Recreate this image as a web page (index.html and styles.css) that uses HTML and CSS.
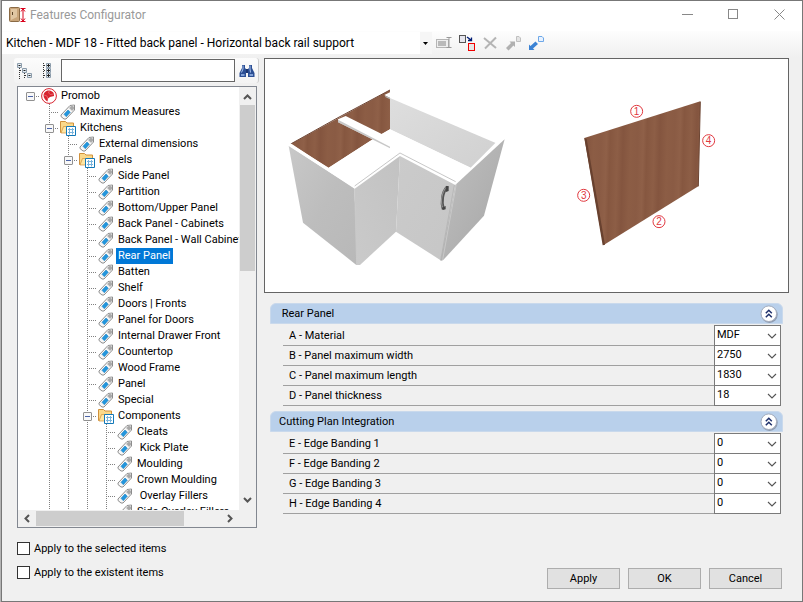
FILE: index.html
```html
<!DOCTYPE html>
<html lang="en">
<head>
    <meta charset="UTF-8">
    <meta name="viewport" content="width=device-width, initial-scale=1.0">
    <title>Features Configurator</title>
    <link rel="stylesheet" href="styles.css">
</head>
<body>
    <!-- shared icons -->
    <svg class="defs" width="0" height="0">
        <symbol id="tag" viewBox="0 0 16 16">
            <path d="M1 11L10 1.500L14.500 1V6L6 15H4L1 12.500Z" fill="#f7f7f7" stroke="#8c8c8c"/>
            <path d="M10.300 2L14 1.500V5.500L12.300 7.500L8.500 4Z" fill="#d2d2d2"/>
            <path d="M11 3H13V5H11Z" fill="#fff" stroke="#777" stroke-width=".8"/>
            <path d="M4 10.300L8 6L10.300 8.200L6.300 12.700Z" fill="#2196de" stroke="#1b7fc0" stroke-width=".6"/>
        </symbol>
        <symbol id="folder" viewBox="0 0 16 16">
            <path d="M.5 12.500V1.500H5.500L7 3H13.500V12.500Z" fill="#fbd98a" stroke="#d0913c"/>
            <path d="M1 13L3.500 6.500H14V13Z" fill="#ffe7a5" stroke="#d0913c" stroke-width=".7"/>
            <path d="M6.500 6.500H15.500V15.500H6.500Z" fill="#fff" stroke="#1479b8"/>
            <path d="M8 9.500H14M8 12.500H14M9.500 8V14.500M12.500 8V14.500" stroke="#78b4dc"/>
        </symbol>
        <symbol id="promob" viewBox="0 0 16 16">
            <circle cx="8" cy="8" r="7.400" fill="#fff" stroke="#d8232f" stroke-width="1"/>
            <path d="M8.500 2.500C5 2 2.800 4.500 2.500 7.500C2.500 10 4.500 12.500 6.500 13.500L7 10.500L9 9L13 8C13.500 5 11.500 3 8.500 2.500Z" fill="#d8232f"/>
            <path d="M8.500 2.500L7.500 5L9.500 6.500L13 6M2.800 7L6 8L7 11" stroke="#f29a9f" stroke-width=".5" fill="none"/>
        </symbol>
        <symbol id="chevron" viewBox="0 0 10 6">
            <path d="M1 1L5 5L9 1" fill="none" stroke="#555" stroke-width="1.100"/>
        </symbol>
        <symbol id="collapse" viewBox="0 0 18 18">
            <circle cx="9.500" cy="9.700" r="8.200" fill="#8e9bb0"/>
            <circle cx="8.800" cy="8.700" r="7.800" fill="#fff" stroke="#a3acbd"/>
            <path d="M5.800 8.300L8.800 5.300L11.800 8.300M5.800 12.300L8.800 9.300L11.800 12.300" fill="none" stroke="#1d2f6b" stroke-width="1.500"/>
        </symbol>
    </svg>

    <div class="window">
        <header class="titlebar">
            <svg class="app-icon" width="18" height="16" viewBox="0 0 18 16">
                <rect x=".5" y=".5" width="10" height="14" rx="1" fill="#c9a57a" stroke="#8a6a45"/>
                <path d="M2 2H8V10L2 13Z" fill="#e0c6a2"/>
                <path d="M3.500 5V8" stroke="#5c4427"/>
                <path d="M11.500 1.500H16.500M11.500 14.500H16.500M14 2V14M12 4.500L14 2L16 4.500M12 11.500L14 14L16 11.500" fill="none" stroke="#d9001b"/>
            </svg>
            <h1>Features Configurator</h1>
            <div class="window-buttons">
                <button type="button" aria-label="Minimize"><svg width="11" height="11"><path d="M0 5.500H11" stroke="#888"/></svg></button>
                <button type="button" aria-label="Maximize"><svg width="11" height="11"><rect x=".5" y=".5" width="9" height="9" fill="none" stroke="#888"/></svg></button>
                <button type="button" aria-label="Close"><svg width="11" height="11"><path d="M.5 .5L10.500 10.500M10.500 .5L.5 10.500" stroke="#888"/></svg></button>
            </div>
        </header>

        <div class="toolbar">
            <div class="model">
                <select aria-label="Model">
                    <option>Kitchen - MDF 18 - Fitted back panel - Horizontal back rail support</option>
                </select>
                <svg class="model-arrow" width="5" height="3"><path d="M0 0H5L2.500 3Z" fill="#000"/></svg>
            </div>
            <button type="button" aria-label="Rename">
                <svg width="16" height="16" viewBox="0 0 16 16">
                    <rect x=".5" y="4.500" width="12" height="8" fill="#eee" stroke="#b5b5b5"/>
                    <rect x="2" y="6" width="8" height="5" fill="#b9b9b9"/>
                    <path d="M10.500 2.500H15.500M10.500 12.500H15.500M13 2.500V12.500" stroke="#999"/>
                </svg>
            </button>
            <button type="button" aria-label="Duplicate">
                <svg width="16" height="16" viewBox="0 0 16 16">
                    <rect x=".5" y=".5" width="6" height="7" fill="#e6e6ee" stroke="#555"/>
                    <path d="M8 2L12 5M12.500 2.500V5.500H9" fill="none" stroke="#001c74" stroke-width="1.300"/>
                    <rect x="9.500" y="8.500" width="6" height="7" fill="#e6e6e6" stroke="#f00000"/>
                </svg>
            </button>
            <button type="button" aria-label="Delete">
                <svg width="16" height="16" viewBox="0 0 16 16"><path d="M2 3L14 13M14 2.500L3 13.500" stroke="#b4b4b4" stroke-width="2"/></svg>
            </button>
            <button type="button" aria-label="Export">
                <svg width="16" height="16" viewBox="0 0 16 16">
                    <path d="M1 13L6 8L4.500 6.500H10V12L8.500 10.500L3.500 15.500Z" fill="#b0b0b0"/>
                    <path d="M11.500 1.500H14L15.500 3V6.500H11.500Z" fill="#e4e4e4" stroke="#c0c0c0"/>
                </svg>
            </button>
            <button type="button" aria-label="Import">
                <svg width="16" height="16" viewBox="0 0 16 16">
                    <path d="M1 9.500L2.500 11L7.500 6.500L10 9L5 13.500L6.500 15H1Z" fill="#3b82d4"/>
                    <path d="M10.500 1.500H14L15.500 3V6.500H10.500Z" fill="#e8f2ff" stroke="#6ea8e8"/>
                </svg>
            </button>
        </div>

        <main class="content">
            <section class="sidebar">
                <div class="search">
                    <button type="button" aria-label="Expand tree">
                        <svg width="16" height="16" viewBox="0 0 16 16">
                            <path d="M2.500 5V16M7.500 10V16" stroke="#333" stroke-dasharray="1 1"/>
                            <path d="M3 7.500H6M8 12.500H11" stroke="#333" stroke-dasharray="1 1"/>
                            <path d="M.5 .5H4.500V4.500H.5ZM5.500 5.500H9.500V9.500H5.500ZM10.500 10.500H14.500V14.500H10.500Z" fill="#e4ecf2" stroke="#8c9cab"/>
                            <path d="M1.500 2.500H3.500M6.500 7.500H8.500M11.500 12.500H13.500" stroke="#222"/>
                        </svg>
                    </button>
                    <button type="button" aria-label="Collapse tree">
                        <svg width="16" height="16" viewBox="0 0 16 16">
                            <path d="M4.500 0V16M5 2.500H8M5 7.500H8M5 12.500H8" stroke="#333" stroke-dasharray="1 1"/>
                            <path d="M7.500 .5H11.500V4.500H7.500ZM7.500 5.500H11.500V9.500H7.500ZM7.500 10.500H11.500V14.500H7.500Z" fill="#e4ecf2" stroke="#8c9cab"/>
                            <path d="M8 2.500H11M9.500 1V4M8 7.500H11M9.500 6V9M8 12.500H11M9.500 11V14" stroke="#222"/>
                        </svg>
                    </button>
                    <input type="text" aria-label="Search">
                    <button type="button" aria-label="Find">
                        <svg width="16" height="14" viewBox="0 0 16 14">
                            <path d="M3 1H6V4L7 5V13H.5V9L3 4ZM10 1H13V4L15.500 9V13H9V5L10 4Z" fill="#2c4f94"/>
                            <path d="M7 5H9V9H7Z" fill="#1b3570"/>
                            <path d="M4 1.500V5L2.500 8.500M11 1.500V5L11.500 8.500" fill="none" stroke="#a9c4ee"/>
                            <path d="M2 11H5.500M10.500 11H14" stroke="#7f9fd6" stroke-width="2"/>
                        </svg>
                    </button>
                </div>

                <div class="tree">
                    <div class="tree-view">
                        <ul>
                            <li>
                                <div class="node"><button type="button" class="toggle" aria-label="Toggle"></button><svg><use href="#promob"/></svg><span>Promob</span></div>
                                <ul>
                                    <li><div class="node leaf"><svg><use href="#tag"/></svg><span>Maximum Measures</span></div></li>
                                    <li>
                                        <div class="node"><button type="button" class="toggle" aria-label="Toggle"></button><svg><use href="#folder"/></svg><span>Kitchens</span></div>
                                        <ul>
                                            <li><div class="node leaf"><svg><use href="#tag"/></svg><span>External dimensions</span></div></li>
                                            <li>
                                                <div class="node"><button type="button" class="toggle" aria-label="Toggle"></button><svg><use href="#folder"/></svg><span>Panels</span></div>
                                                <ul>
                                                    <li><div class="node leaf"><svg><use href="#tag"/></svg><span>Side Panel</span></div></li>
                                                    <li><div class="node leaf"><svg><use href="#tag"/></svg><span>Partition</span></div></li>
                                                    <li><div class="node leaf"><svg><use href="#tag"/></svg><span>Bottom/Upper Panel</span></div></li>
                                                    <li><div class="node leaf"><svg><use href="#tag"/></svg><span>Back Panel - Cabinets</span></div></li>
                                                    <li><div class="node leaf"><svg><use href="#tag"/></svg><span>Back Panel - Wall Cabinets</span></div></li>
                                                    <li><div class="node leaf"><svg><use href="#tag"/></svg><span class="selected">Rear Panel</span></div></li>
                                                    <li><div class="node leaf"><svg><use href="#tag"/></svg><span>Batten</span></div></li>
                                                    <li><div class="node leaf"><svg><use href="#tag"/></svg><span>Shelf</span></div></li>
                                                    <li><div class="node leaf"><svg><use href="#tag"/></svg><span>Doors | Fronts</span></div></li>
                                                    <li><div class="node leaf"><svg><use href="#tag"/></svg><span>Panel for Doors</span></div></li>
                                                    <li><div class="node leaf"><svg><use href="#tag"/></svg><span>Internal Drawer Front</span></div></li>
                                                    <li><div class="node leaf"><svg><use href="#tag"/></svg><span>Countertop</span></div></li>
                                                    <li><div class="node leaf"><svg><use href="#tag"/></svg><span>Wood Frame</span></div></li>
                                                    <li><div class="node leaf"><svg><use href="#tag"/></svg><span>Panel</span></div></li>
                                                    <li><div class="node leaf"><svg><use href="#tag"/></svg><span>Special</span></div></li>
                                                    <li>
                                                        <div class="node"><button type="button" class="toggle" aria-label="Toggle"></button><svg><use href="#folder"/></svg><span>Components</span></div>
                                                        <ul>
                                                            <li><div class="node leaf"><svg><use href="#tag"/></svg><span>Cleats</span></div></li>
                                                            <li><div class="node leaf"><svg><use href="#tag"/></svg><span>&nbsp;Kick Plate</span></div></li>
                                                            <li><div class="node leaf"><svg><use href="#tag"/></svg><span>Moulding</span></div></li>
                                                            <li><div class="node leaf"><svg><use href="#tag"/></svg><span>Crown Moulding</span></div></li>
                                                            <li><div class="node leaf"><svg><use href="#tag"/></svg><span>&nbsp;Overlay Fillers</span></div></li>
                                                            <li><div class="node leaf"><svg><use href="#tag"/></svg><span>Side Overlay Fillers</span></div></li>
                                                        </ul>
                                                    </li>
                                                </ul>
                                            </li>
                                        </ul>
                                    </li>
                                </ul>
                            </li>
                        </ul>
                    </div>
                    <div class="scroll-y">
                        <svg width="9" height="6" viewBox="0 0 9 6"><path d="M1 5L4.500 1.500L8 5" fill="none" stroke="#555" stroke-width="2"/></svg>
                        <div class="track"><div class="thumb"></div></div>
                        <svg width="9" height="6" viewBox="0 0 9 6"><path d="M1 1L4.500 4.500L8 1" fill="none" stroke="#555" stroke-width="2"/></svg>
                    </div>
                    <div class="scroll-x">
                        <svg width="6" height="9" viewBox="0 0 6 9"><path d="M5 1L1.500 4.500L5 8" fill="none" stroke="#555" stroke-width="2"/></svg>
                        <div class="track"><div class="thumb"></div></div>
                        <svg width="6" height="9" viewBox="0 0 6 9"><path d="M1 1L4.500 4.500L1 8" fill="none" stroke="#555" stroke-width="2"/></svg>
                    </div>
                </div>
            </section>

            <section class="details">
                <svg class="preview" viewBox="0 0 523 233">
                    <defs>
                        <linearGradient id="left" x1="0" y1="0" x2="1" y2="1"><stop offset="0" stop-color="#c8c8c8"/><stop offset=".5" stop-color="#bdbdbd"/><stop offset="1" stop-color="#b8b8b8"/></linearGradient>
                        <linearGradient id="inner" x1="1" y1="0" x2="0" y2="1"><stop offset="0" stop-color="#c2c2c2"/><stop offset="1" stop-color="#cacaca"/></linearGradient>
                        <linearGradient id="right" x1="0" y1="0" x2="1" y2="1"><stop offset="0" stop-color="#c0c0c0"/><stop offset="1" stop-color="#a6a6a6"/></linearGradient>
                        <linearGradient id="wall" x1="0" y1="0" x2="1" y2="1"><stop offset="0" stop-color="#dedede"/><stop offset="1" stop-color="#d0d0d0"/></linearGradient>
                        <linearGradient id="door" x1="0" y1="0" x2="1" y2="1"><stop offset="0" stop-color="#cbcbcb"/><stop offset="1" stop-color="#c6c6c6"/></linearGradient>
                        <linearGradient id="wood" x1="0" y1="0" x2="110" y2="3" gradientUnits="userSpaceOnUse" spreadMethod="repeat">
                            <stop offset="0" stop-color="#8a5b44"/><stop offset=".15" stop-color="#8f6048"/><stop offset=".25" stop-color="#865740"/>
                            <stop offset=".45" stop-color="#8d5e46"/><stop offset=".6" stop-color="#84553f"/><stop offset=".8" stop-color="#8c5d45"/><stop offset="1" stop-color="#8a5b44"/>
                        </linearGradient>
                    </defs>
                    <!-- corner cabinet -->
                    <g transform="translate(-1 -3) scale(.3333)">
                        <path d="M80 264L378 102V220L353 234L323 252L194 335Z" fill="url(#wood)"/>
                        <path d="M378 122L697 258L620 335L378 220Z" fill="url(#wall)"/>
                        <path d="M378 220L620 335L577 380L408 290L270 392L194 335L323 252Z" fill="#fff"/>
                        <path d="M361 117L378 109L722 249L697 262L378 126Z" fill="#fff"/>
                        <path d="M364 119L378 125V130L364 123Z" fill="#b5b5b5"/>
                        <path d="M378 102L222 185L80 264" fill="none" stroke="#6e4635" stroke-width="3"/>
                        <path d="M222 190L245 180L394 254L378 276L222 198Z" fill="#fff"/>
                        <path d="M222 191L378 272V277L222 199Z" fill="#c8c8c8"/>
                        <path d="M74 270L270 395L285 627L276 626L117 500Z" fill="url(#left)"/>
                        <path d="M73 268L80 262L270 387L408 289L582 379L722 247V254L578 387L408 299L272 398Z" fill="#fff"/>
                        <path d="M272 390L408 291L575 377" fill="none" stroke="#bcbcbc" stroke-width="2.500"/>
                        <path d="M272 398L408 300L396 527L288 627H278Z" fill="url(#inner)"/>
                        <path d="M272 398L278 626" stroke="#c9c9c9" stroke-width="3"/>
                        <path d="M408 300L574 387L532 614L396 527Z" fill="url(#door)"/>
                        <path d="M574 387L581 380L722 250L660 479L537 613L530 614Z" fill="url(#right)"/>
                        <path d="M577 384L536 612" stroke="#d2d2d2" stroke-width="2"/>
                        <path d="M571 387L530 613" stroke="#a8a8a8" stroke-width="1.500"/>
                        <path d="M550 392C535 408 531 438 538 460" fill="none" stroke="#555" stroke-width="9"/>
                        <path d="M549 391C533 408 528 438 537 457" fill="none" stroke="#999" stroke-width="3"/>
                        <path d="M546 390H554V405L546 408ZM533 455L545 450V460L537 462Z" fill="#444"/>
                    </g>
                    <!-- rear panel with numbered edges -->
                    <g transform="translate(265 -3) scale(.3333)">
                        <path d="M163 246L511 136L505 391L220 568Z" fill="url(#wood)"/>
                        <path d="M163 246L170 249L225 566L218 568Z" fill="#68412f"/>
                        <path d="M511 137L505 391" stroke="#6b4432" stroke-width="3"/>
                        <g class="edge">
                            <circle cx="320" cy="166" r="18"/><text x="320" y="177">1</text>
                            <circle cx="387" cy="497" r="18"/><text x="387" y="508">2</text>
                            <circle cx="161" cy="418" r="18"/><text x="161" y="429">3</text>
                            <circle cx="536" cy="254" r="18"/><text x="536" y="265">4</text>
                        </g>
                    </g>
                </svg>

                <div class="group">
                    <div class="group-head"><h2>&nbsp;Rear Panel</h2><button type="button" aria-label="Collapse"><svg width="18" height="18"><use href="#collapse"/></svg></button></div>
                    <div class="row"><label for="a">A - Material</label><div class="combo"><select id="a"><option>MDF</option></select><svg><use href="#chevron"/></svg></div></div>
                    <div class="row"><label for="b">B - Panel maximum width</label><div class="combo"><select id="b"><option>2750</option></select><svg><use href="#chevron"/></svg></div></div>
                    <div class="row"><label for="c">C - Panel maximum length</label><div class="combo"><select id="c"><option>1830</option></select><svg><use href="#chevron"/></svg></div></div>
                    <div class="row"><label for="d">D - Panel thickness</label><div class="combo"><select id="d"><option>18</option></select><svg><use href="#chevron"/></svg></div></div>
                </div>

                <div class="group">
                    <div class="group-head"><h2>Cutting Plan Integration</h2><button type="button" aria-label="Collapse"><svg width="18" height="18"><use href="#collapse"/></svg></button></div>
                    <div class="row"><label for="e">E - Edge Banding 1</label><div class="combo"><select id="e"><option>0</option></select><svg><use href="#chevron"/></svg></div></div>
                    <div class="row"><label for="f">F - Edge Banding 2</label><div class="combo"><select id="f"><option>0</option></select><svg><use href="#chevron"/></svg></div></div>
                    <div class="row"><label for="g">G - Edge Banding 3</label><div class="combo"><select id="g"><option>0</option></select><svg><use href="#chevron"/></svg></div></div>
                    <div class="row"><label for="h">H - Edge Banding 4</label><div class="combo"><select id="h"><option>0</option></select><svg><use href="#chevron"/></svg></div></div>
                </div>
            </section>
        </main>

        <footer class="footer">
            <div class="checks">
                <label><input type="checkbox"> Apply to the selected items</label>
                <label><input type="checkbox"> Apply to the existent items</label>
            </div>
            <div class="actions">
                <button type="button">Apply</button>
                <button type="button">OK</button>
                <button type="button">Cancel</button>
            </div>
        </footer>
    </div>
</body>
</html>
```
FILE: styles.css
```css
* {
    box-sizing: border-box;
}
body {
    margin: 0;
    font-family: Roboto, Arial, sans-serif;
    font-size: 11px;
    color: #000;
    background-color: #b4b4b4;
}
svg {
    display: block;
    flex: none;
}
button, input, select {
    font: inherit;
    color: inherit;
    margin: 0;
    padding: 0;
    border: none;
    border-radius: 0;
    background: none;
}
select {
    appearance: none;
}
ul {
    list-style: none;
    margin: 0;
    padding: 0;
}
.defs {
    position: absolute;
}
.window {
    display: flex;
    flex-direction: column;
    height: 100vh;
    margin-left: 1px;
    border: 1px solid #777;
    background-color: #f0f0f0;
}

/* title bar */
.titlebar {
    display: flex;
    align-items: center;
    height: 30px;
    padding: 0 0 3px 7px;
    background-color: #fff;
}
.titlebar h1 {
    flex: 1;
    margin: 0 0 0 3px;
    font-size: 12px;
    font-weight: normal;
    color: #999;
}
.window-buttons {
    display: flex;
}
.window-buttons button {
    display: grid;
    place-items: center;
    width: 46px;
    height: 27px;
}

/* toolbar */
.toolbar {
    display: flex;
    align-items: center;
    gap: 7px;
    height: 27px;
    padding-bottom: 4px;
    background: linear-gradient(#fdfdfd, #f0f0f0);
}
.model {
    position: relative;
    width: 430px;
    margin-right: -3px;
}
.model select {
    display: block;
    width: 100%;
    height: 22px;
    padding-left: 4px;
    font-size: 12px;
    background: linear-gradient(to right, #fff 418px, #f6f6f6 418px);
}
.model-arrow {
    position: absolute;
    right: 4px;
    top: 10px;
}

.content {
    flex: 1;
    display: flex;
    min-height: 0;
    padding-right: 13px;
}

/* tree side */
.sidebar {
    display: flex;
    flex-direction: column;
    width: 262px;
    padding-left: 12px;
}
.search {
    display: flex;
    align-items: center;
    gap: 4px;
    width: 245px;
    height: 25px;
    margin-bottom: 3px;
    padding-left: 3px;
    background: linear-gradient(#fcfcfc, #f3f3f3);
    border-right: 1px solid #ccc;
    border-radius: 3px;
}
.search button {
    width: 18px;
    flex: none;
}
.search input {
    width: 174px;
    height: 23px;
    padding: 0 4px;
    border: 1px solid #666;
    background-color: #fff;
}
.tree {
    flex: 1;
    display: grid;
    grid-template: minmax(0, 1fr) 17px / minmax(0, 1fr) 17px;
    width: 240px;
    min-height: 0;
    margin-left: 3px;
    border: 1px solid #828790;
    background-color: #f0f0f0;
}
.tree-view {
    overflow: hidden;
    padding: 1px 0 0 3px;
    background-color: #fff;
}
.tree-view ul ul {
    margin-left: 19px;
    background: repeating-linear-gradient(#808080 0 1px, transparent 1px 2px) 9px 0 / 1px 100% no-repeat;
}
.node {
    display: flex;
    align-items: center;
    height: 16px;
    white-space: nowrap;
    background: repeating-linear-gradient(to right, #808080 0 1px, transparent 1px 2px) 9px 8px / 10px 1px no-repeat;
}
.leaf {
    padding-left: 19px;
}
.toggle {
    width: 9px;
    height: 9px;
    margin: 0 5px;
    border: 1px solid #919191;
    border-radius: 1px;
    background: linear-gradient(#4b63a7, #4b63a7) center / 5px 1px no-repeat, #f8f8f8;
}
.node svg {
    width: 16px;
    height: 16px;
    margin-left: 1px;
}
.node span {
    margin-left: 2px;
    padding: 0 2px;
    line-height: 16px;
}
.node .selected {
    color: #fff;
    background-color: #0078d7;
}
.scroll-y, .scroll-x {
    display: flex;
    align-items: center;
    padding: 7px 0;
}
.scroll-y {
    flex-direction: column;
    gap: 5px;
}
.scroll-x {
    padding: 0 6px;
    gap: 6px;
}
.track {
    flex: 1;
}
.scroll-y .thumb {
    width: 15px;
    height: 43%;
    background-color: #cdcdcd;
}
.scroll-x .thumb {
    width: 80%;
    height: 15px;
    background-color: #cdcdcd;
}

/* details side */
.details {
    flex: 1;
    min-width: 0;
}
.preview {
    width: 100%;
    border: 1px solid #646464;
    background-color: #fff;
}
.edge circle {
    fill: none;
    stroke: #e0383e;
    stroke-width: 3;
}
.edge text {
    fill: #e0383e;
    font-family: "Liberation Sans", Arial, sans-serif;
    font-size: 30px;
    text-anchor: middle;
}
.group {
    margin: 5px 6px 0;
}
.preview + .group {
    margin-top: 10px;
}
.group-head {
    display: flex;
    align-items: center;
    height: 21px;
    margin-bottom: 2px;
    padding: 0 4px 0 8px;
    border: 1px solid #c9d9ec;
    border-radius: 6px 6px 0 0;
    background-color: #b9d0eb;
}
.group-head h2 {
    flex: 1;
    margin: 0;
    font-size: 11px;
    font-weight: normal;
}
.row {
    display: flex;
    align-items: center;
    height: 20px;
    margin: 0 2px 0 13px;
    padding-left: 6px;
    border-bottom: 1px solid #a0a0a0;
}
.row label {
    flex: 1;
}
.combo {
    position: relative;
    width: 67px;
}
.combo select {
    display: block;
    width: 100%;
    height: 21px;
    padding: 0 0 2px 2px;
    border: 1px solid #7a7a7a;
    background-color: #fff;
}
.combo svg {
    position: absolute;
    right: 4px;
    top: 8px;
    width: 10px;
    height: 6px;
    pointer-events: none;
}

/* footer */
.footer {
    display: flex;
    justify-content: space-between;
    align-items: flex-end;
    padding: 8px 20px 12px 15px;
}
.checks {
    padding-bottom: 5px;
}
.checks label {
    display: flex;
    align-items: center;
    gap: 4px;
    height: 24px;
}
.checks input {
    appearance: none;
    width: 13px;
    height: 13px;
    border: 1px solid #333;
    background-color: #fff;
}
.actions {
    display: flex;
    gap: 8px;
}
.actions button {
    width: 73px;
    height: 21px;
    border: 1px solid #adadad;
    background-color: #e1e1e1;
}
```
